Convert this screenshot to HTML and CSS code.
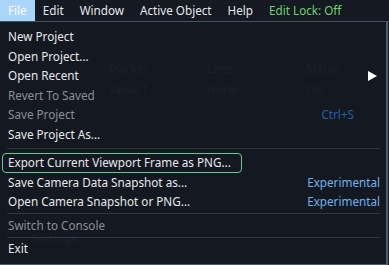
FILE: index.html
```html
<!DOCTYPE html>
<html>
<head>
<meta charset="utf-8">
<link rel="stylesheet" href="styles.css">
</head>
<body>
<div class="app">
  <nav class="menubar">
    <span class="mb-item active">File</span>
    <span class="mb-item">Edit</span>
    <span class="mb-item">Window</span>
    <span class="mb-item">Active Object</span>
    <span class="mb-item">Help</span>
    <span class="mb-item lock">Edit Lock: Off</span>
  </nav>
  <div class="workspace">
    <div class="table">
      <span>Tracker</span><span>Lens</span><span>Status</span>
      <span>Value 1</span><span>None</span><span>OK</span>
    </div>
    <div class="settings">Settings</div>
  </div>
  <div class="menu">
    <div class="row">New Project</div>
    <div class="row">Open Project...</div>
    <div class="row"><span class="label">Open Recent</span><span class="arrow"></span></div>
    <div class="row disabled">Revert To Saved</div>
    <div class="row disabled"><span class="label">Save Project</span><span class="shortcut">Ctrl+S</span></div>
    <div class="row">Save Project As...</div>
    <div class="sep sep-first"></div>
    <div class="row focused">Export Current Viewport Frame as PNG...</div>
    <div class="row"><span class="label">Save Camera Data Snapshot as...</span><span class="tag">Experimental</span></div>
    <div class="row"><span class="label">Open Camera Snapshot or PNG...</span><span class="tag">Experimental</span></div>
    <div class="sep"></div>
    <div class="row disabled">Switch to Console</div>
    <div class="sep"></div>
    <div class="row">Exit</div>
  </div>
</div>
</body>
</html>
```
FILE: styles.css
```css
* { box-sizing: border-box; }
html, body {
  margin: 0;
  padding: 0;
  background: #141922;
  width: 389px;
  height: 265px;
  overflow: hidden;
}
body {
  font-family: "Noto Sans", "Open Sans", sans-serif;
  font-size: 11.7px;
  color: #e6e8ea;
}
.app {
  position: relative;
  display: flex;
  flex-direction: column;
  height: 265px;
}
.menubar {
  display: flex;
  height: 22px;
  border-bottom: 1px solid #44525f;
  line-height: 21px;
  background: #141922;
}
.mb-item {
  padding: 0 8px;
  color: #e6e8ea;
}
.mb-item.active {
  background: #a8d5f8;
  color: #ffffff;
}
.mb-item.lock {
  color: #6ed46c;
}
.workspace {
  flex: 1;
  padding: 36px 0 0 108px;
  color: #ffffff;
}
.table {
  display: grid;
  grid-template-columns: 99px 99px 99px;
  grid-auto-rows: 21px;
  line-height: 21px;
}
.settings {
  margin: 133px 0 0 -76px;
  line-height: 10px;
  height: 10px;
}
.menu {
  position: absolute;
  left: 0;
  top: 22px;
  width: 388px;
  height: 243px;
  background: rgba(20, 25, 34, 0.975);
  border-right: 2px solid #4a5d6c;
  border-bottom: 1px solid #4a5d6c;
  padding: 5px 6px 0 2px;
  display: flex;
  flex-direction: column;
}
.row {
  height: 19.6px;
  line-height: 19.6px;
  padding-left: 6px;
  display: flex;
  align-items: center;
  white-space: nowrap;
}
.row .label { flex: 1; }
.row.disabled { color: #8b8f95; }
.shortcut {
  color: #2162a6;
  padding-right: 26px;
}
.tag {
  color: #6fb3ec;
}
.arrow {
  width: 0;
  height: 0;
  border-top: 5px solid transparent;
  border-bottom: 5px solid transparent;
  border-left: 9px solid #ffffff;
  margin-right: 3px;
}
.sep {
  height: 4px;
  margin-left: 5px;
  display: flex;
  align-items: center;
}
.sep::before {
  content: "";
  flex: 1;
  height: 1px;
  background: #2c3640;
}
.sep-first {
  height: 8px;
}
.focused {
  height: 20px;
  border: 1px solid #62c792;
  border-radius: 4px;
  padding-left: 5px;
  width: 240px;
}
```
